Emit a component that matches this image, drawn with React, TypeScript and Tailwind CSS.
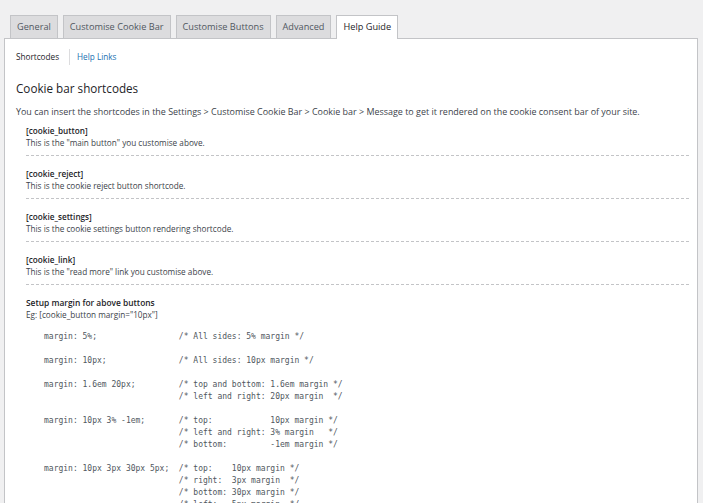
import React from "react";

const tabs = ["General", "Customise Cookie Bar", "Customise Buttons", "Advanced", "Help Guide"];

const items = [
  { t: "[cookie_button]", d: 'This is the "main button" you customise above.' },
  { t: "[cookie_reject]", d: "This is the cookie reject button shortcode." },
  { t: "[cookie_settings]", d: "This is the cookie settings button rendering shortcode." },
  { t: "[cookie_link]", d: 'This is the "read more" link you customise above.' },
];

const code = `margin: 5%;                 /* All sides: 5% margin */

margin: 10px;               /* All sides: 10px margin */

margin: 1.6em 20px;         /* top and bottom: 1.6em margin */
                            /* left and right: 20px margin  */

margin: 10px 3% -1em;       /* top:            10px margin */
                            /* left and right: 3% margin   */
                            /* bottom:         -1em margin */

margin: 10px 3px 30px 5px;  /* top:    10px margin */
                            /* right:  3px margin  */
                            /* bottom: 30px margin */
                            /* left:   5px margin  */`;

export default function App() {
  return (
    <div className="w-[703px] h-[503px] overflow-hidden bg-[#f0f0f1] font-['Open_Sans',sans-serif] text-[#3c434a]">
      <div className="flex items-end gap-[5px] pl-[10px] pt-[15px]">
        {tabs.map((t, i) => {
          const active = i === tabs.length - 1;
          return (
            <div
              key={t}
              className={
                active
                  ? "relative z-10 -mb-px flex h-[24px] items-center border border-b-0 border-[#c3c4c7] bg-white px-[6px] pb-px text-[9.2px] font-medium text-[#1d2327]"
                  : "flex h-[23px] items-center border border-b-0 border-[#c3c4c7] bg-[#dcdcde] px-[6px] text-[9.2px] font-medium text-[#50575e]"
              }
            >
              {t}
            </div>
          );
        })}
      </div>
      <div className="ml-[4px] h-[500px] w-[694px] border border-[#c3c4c7] bg-white pl-[11px] pr-[8px]">
        <div className="mt-[10px] flex h-[16px] items-center text-[8.2px]">
          <span className="pr-[10px] text-[#1d2327]">Shortcodes</span>
          <span className="h-[16px] w-px bg-[#dcdcde]"></span>
          <span className="pl-[7px] text-[#2271b1]">Help Links</span>
        </div>
        <div className="mt-[15px] h-[16px] text-[11.7px] leading-[16px] text-[#1d2327]">Cookie bar shortcodes</div>
        <p className="mt-[10px] text-[8.95px] leading-[12px]">
          You can insert the shortcodes in the Settings &gt; Customise Cookie Bar &gt; Cookie bar &gt; Message to get it rendered on the cookie consent bar of your site.
        </p>
        <div className="ml-[10px] mt-[7px] text-[8.2px] leading-[12px]">
          {items.map((it, i) => (
            <div key={it.t} className={(i === 0 ? "" : "pt-[12px] ") + "border-b border-dashed border-[#c3c4c7] pb-[6px]"}>
              <div className="font-semibold text-[#1d2327]">{it.t}</div>
              <div>{it.d}</div>
            </div>
          ))}
          <div className="pt-[12px]">
            <div className="text-[8.4px] font-semibold text-[#1d2327]">Setup margin for above buttons</div>
            <div>Eg: [cookie_button margin="10px"]</div>
            <pre className="ml-[18px] mt-[10px] whitespace-pre font-['DejaVu_Sans_Mono',monospace] text-[8px] leading-[12px] text-[#50575e]">
              {code}
            </pre>
          </div>
        </div>
      </div>
    </div>
  );
}
